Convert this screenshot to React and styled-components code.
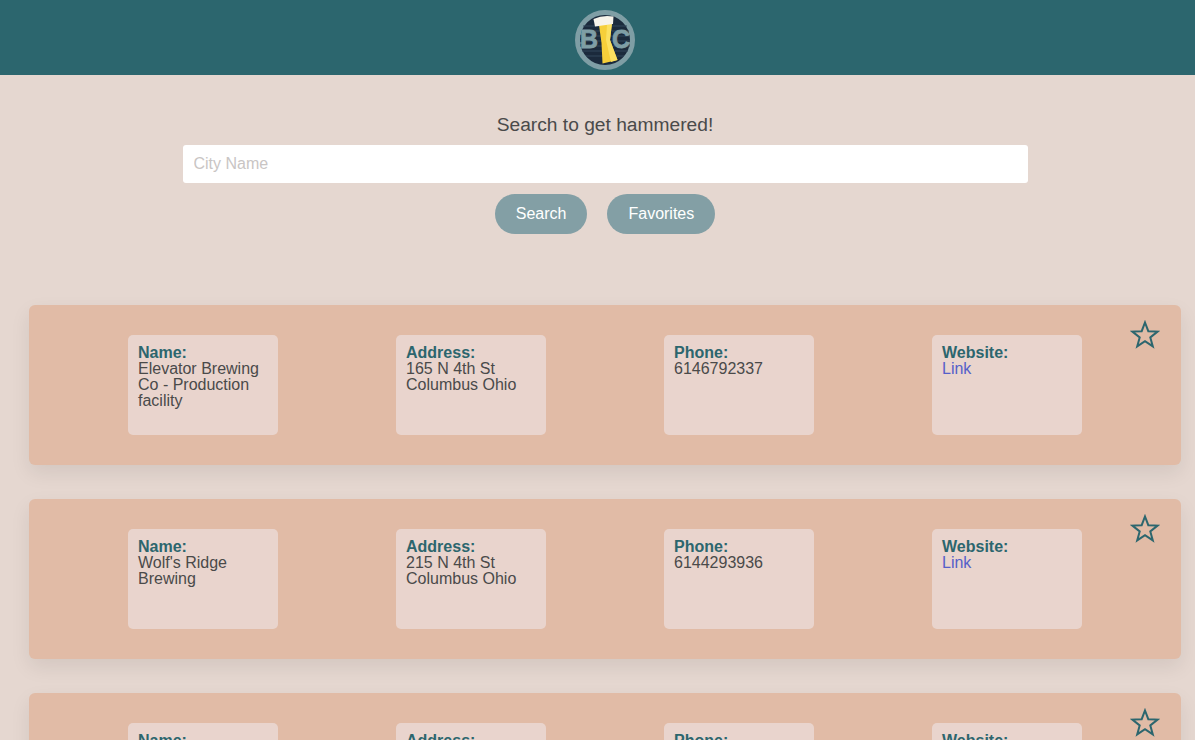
import styled, { createGlobalStyle } from "styled-components";

const GlobalStyle = createGlobalStyle`
  html, body {
    margin: 0;
    height: 100%;
    overflow: hidden;
    background: #e5d7d0;
  }
  body {
    font-family: "Liberation Sans", Arial, sans-serif;
    color: #4a4a4a;
  }
`;

const Page = styled.div`
  width: 1210px;
`;

const Header = styled.header`
  height: 75px;
  box-sizing: border-box;
  padding-top: 5px;
  background: #2c666e;
  display: flex;
  align-items: center;
  justify-content: center;
`;

const SearchArea = styled.section`
  padding-top: 39px;
  display: flex;
  flex-direction: column;
  align-items: center;
`;

const Heading = styled.div`
  font-size: 19.2px;
  line-height: 22px;
  color: #4a4a4a;
`;

const CityInput = styled.input`
  box-sizing: border-box;
  width: 845px;
  height: 38px;
  margin-top: 9px;
  padding: 0 11px;
  border: none;
  border-radius: 3px;
  background: #fff;
  font-family: inherit;
  font-size: 16px;
  outline: none;

  &::placeholder {
    color: #c9c5c4;
    opacity: 1;
  }
`;

const Buttons = styled.div`
  display: flex;
  gap: 20px;
  margin-top: 11px;
`;

const PillButton = styled.button`
  height: 40px;
  padding: 0 21px;
  border: none;
  border-radius: 20px;
  background: #839fa5;
  color: #fff;
  font-family: inherit;
  font-size: 16px;
  cursor: pointer;
`;

const Results = styled.main`
  margin-top: 71px;
  padding: 0 29px;
  display: flex;
  flex-direction: column;
  gap: 34px;
`;

const Card = styled.article`
  position: relative;
  height: 160px;
  box-sizing: border-box;
  padding: 30px 99px;
  display: flex;
  justify-content: space-between;
  border-radius: 6px;
  background: #e1bba6;
  box-shadow: 0 8px 20px rgba(0, 0, 0, 0.08);
`;

const InfoBox = styled.div`
  box-sizing: border-box;
  width: 150px;
  height: 100px;
  padding: 10px;
  border-radius: 5px;
  background: #e9d4cd;
  font-size: 16px;
  line-height: 16px;
  color: #4a4a4a;
`;

const Label = styled.div`
  font-weight: 700;
  color: #2c666e;
`;

const SiteLink = styled.a`
  color: #5560c9;
  text-decoration: none;
`;

const FavoriteStar = styled.button`
  position: absolute;
  top: 15px;
  right: 21px;
  width: 30px;
  height: 30px;
  padding: 0;
  border: none;
  background: none;
  cursor: pointer;
`;

const Logo = () => (
  <svg width="60" height="60" viewBox="0 0 60 60">
    <circle cx="30" cy="30" r="27.5" fill="#1b2a3c" stroke="#7f9ea5" strokeWidth="5" />
    <path d="M8 16H52M6 21H54M5 26H55M5 31H55M5 36H55M7 41H53M11 46H49" stroke="#33475b" strokeWidth="1" />
    <g fontFamily="Liberation Sans" fontWeight="700" fontSize="25" fill="#7f9ea5" stroke="#7f9ea5" strokeWidth="0.8">
      <text x="5" y="38" textLength="18" lengthAdjust="spacingAndGlyphs">B</text>
      <text x="37" y="38" textLength="18" lengthAdjust="spacingAndGlyphs">C</text>
    </g>
    <path d="M3 24H8M3 33H7M52 24H57M51 33H56" stroke="#7f9ea5" strokeWidth="1" />
    <path d="M24 15L37 13 35 30 42.500 50 27.500 53.500 26.500 33Z" fill="#f6cf3a" />
    <path d="M32 15L37 13 35 30 42.500 50 36 52 31 30Z" fill="#fbe060" />
    <path d="M18.500 9Q28 4.500 38.500 6.500L38 14 20 16.500Z" fill="#f7f3ea" />
  </svg>
);

const Star = () => (
  <svg width="30" height="30" viewBox="0 0 30 30">
    <polygon
      points="15,2.500 18.300,11.200 27.600,11.600 20.300,17.400 22.800,26.400 15,21.200 7.200,26.400 9.700,17.400 2.400,11.600 11.700,11.200"
      fill="none"
      stroke="#2c666e"
      strokeWidth="2"
    />
  </svg>
);

const breweries = [
  {
    name: "Elevator Brewing Co - Production facility",
    address: "165 N 4th St Columbus Ohio",
    phone: "6146792337",
  },
  { name: "Wolf's Ridge Brewing", address: "215 N 4th St Columbus Ohio", phone: "6144293936" },
  { name: "", address: "", phone: "" },
];

const App = () => (
  <Page>
    <GlobalStyle />
    <Header>
      <Logo />
    </Header>
    <SearchArea>
      <Heading>Search to get hammered!</Heading>
      <CityInput placeholder="City Name" />
      <Buttons>
        <PillButton>Search</PillButton>
        <PillButton>Favorites</PillButton>
      </Buttons>
    </SearchArea>
    <Results>
      {breweries.map((b, i) => (
        <Card key={i}>
          <InfoBox>
            <Label>Name:</Label>
            {b.name}
          </InfoBox>
          <InfoBox>
            <Label>Address:</Label>
            {b.address}
          </InfoBox>
          <InfoBox>
            <Label>Phone:</Label>
            {b.phone}
          </InfoBox>
          <InfoBox>
            <Label>Website:</Label>
            <SiteLink href="#">Link</SiteLink>
          </InfoBox>
          <FavoriteStar aria-label="Add to favorites">
            <Star />
          </FavoriteStar>
        </Card>
      ))}
    </Results>
  </Page>
);

export default App;
